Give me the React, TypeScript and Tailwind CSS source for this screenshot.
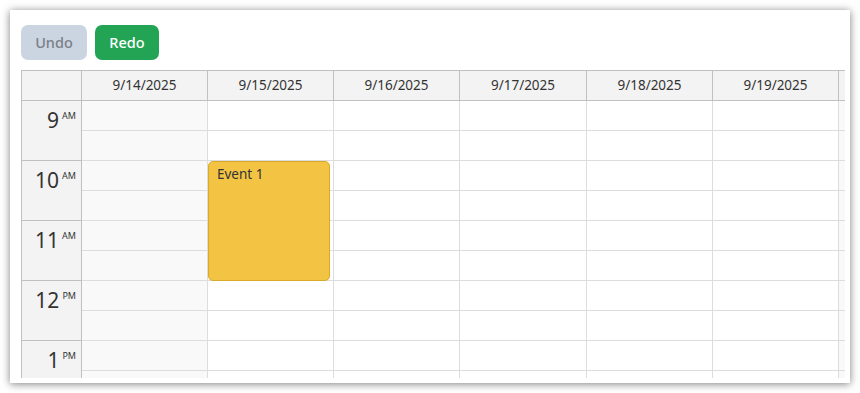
import React from "react";

const days = [
  { label: "9/14/2025", w: "w-[126px]", weekend: true },
  { label: "9/15/2025", w: "w-[126px]", weekend: false },
  { label: "9/16/2025", w: "w-[126px]", weekend: false },
  { label: "9/17/2025", w: "w-[127px]", weekend: false },
  { label: "9/18/2025", w: "w-[126px]", weekend: false },
  { label: "9/19/2025", w: "w-[126px]", weekend: false },
  { label: "", w: "w-[126px]", weekend: true },
];

const hours = [
  { h: "9", s: "AM" },
  { h: "10", s: "AM" },
  { h: "11", s: "AM" },
  { h: "12", s: "PM" },
  { h: "1", s: "PM" },
];

export default function App() {
  return (
    <div
      className="w-[860px] h-[393px] bg-white p-[10px]"
      style={{ fontFamily: '"Noto Sans", "Open Sans", sans-serif' }}
    >
      <div className="w-[840px] h-[373px] bg-white shadow-[0_1px_8px_rgba(0,0,0,0.5)] pl-[11px] pr-[5px] pt-[15px] pb-[5px] flex flex-col">
        <div className="flex gap-[8px] h-[35px] shrink-0">
          <button className="w-[66px] h-[35px] rounded-[7px] bg-[#cbd5e1] text-[#7a7f88] text-[14.5px] font-medium">
            Undo
          </button>
          <button className="w-[64px] h-[35px] rounded-[7px] bg-[#23a455] text-white text-[14.5px] font-medium">
            Redo
          </button>
        </div>
        <div className="mt-[10px] flex-1 overflow-hidden flex flex-col min-h-0">
          <div className="flex h-[31px] shrink-0 text-[13.5px] text-[#333]">
            <div className="w-[61px] shrink-0 border border-[#c0c0c0] bg-[#f3f3f3]" />
            {days.map((d, i) => (
              <div
                key={i}
                className={`${d.w} shrink-0 border-t border-b border-r border-[#c0c0c0] bg-[#f3f3f3] flex items-center justify-center`}
              >
                {d.label}
              </div>
            ))}
          </div>
          <div className="flex flex-1 min-h-0 overflow-hidden">
            <div className="w-[61px] shrink-0 border-l border-r border-[#c0c0c0] bg-[#f3f3f3] text-[#333]">
              {hours.map((t) => (
                <div
                  key={t.h + t.s}
                  className="h-[60px] border-b border-[#c0c0c0] flex justify-end items-start pr-[5px] pt-[7px]"
                >
                  <span className="text-[21px] leading-[24px]">{t.h}</span>
                  <span className="text-[9px] leading-[10px] ml-[3px] mt-[3px]">{t.s}</span>
                </div>
              ))}
              <div className="h-[60px]" />
            </div>
            {days.map((d, i) => (
              <div
                key={i}
                className={`${d.w} shrink-0 border-r border-[#dddddd] relative ${d.weekend ? "bg-[#f9f9f9]" : "bg-white"}`}
              >
                {Array.from({ length: 12 }).map((_, j) => (
                  <div key={j} className="h-[30px] border-b border-[#dddddd]" />
                ))}
                {i === 1 && (
                  <div className="absolute left-0 top-[60px] w-[122px] h-[120px] rounded-[5px] bg-[#f3c443] border border-[#d9a92a] px-[8px] pt-[2px] text-[13.5px] text-[#333]">
                    Event 1
                  </div>
                )}
              </div>
            ))}
          </div>
        </div>
      </div>
    </div>
  );
}
